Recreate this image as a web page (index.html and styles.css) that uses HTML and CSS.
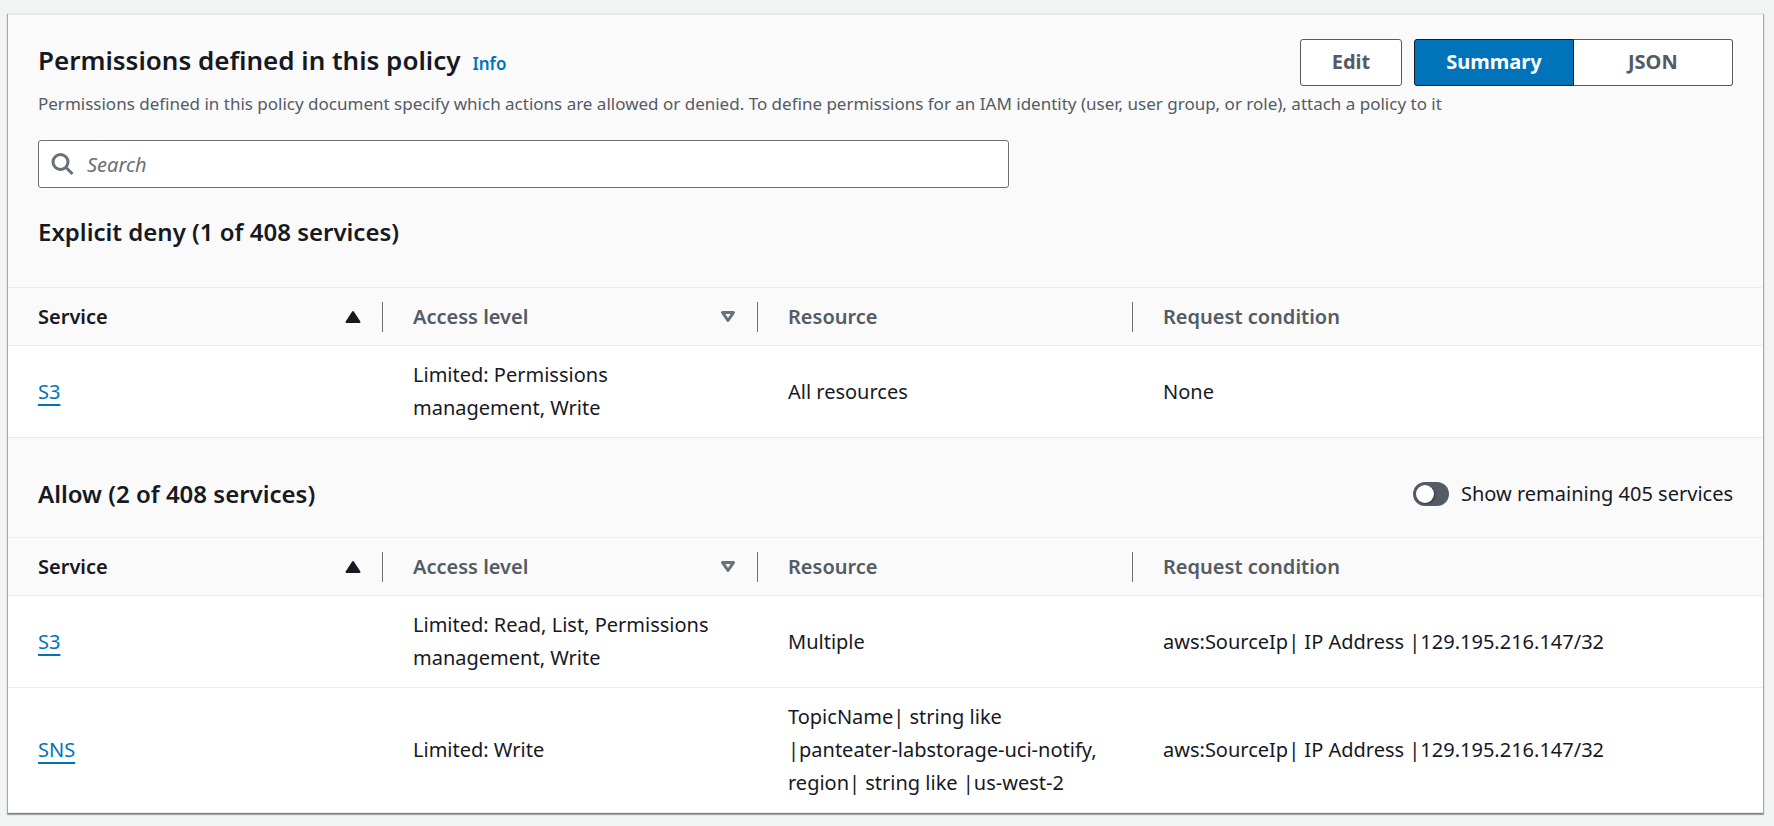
FILE: index.html
```html
<!DOCTYPE html>
<html lang="en">
<head>
    <meta charset="UTF-8">
    <meta name="viewport" content="width=device-width, initial-scale=1.0">
    <title>Permissions defined in this policy</title>
    <link rel="stylesheet" href="styles.css">
</head>
<body>
    <main class="policy-card">
        <header class="policy-header">
            <div class="title-row">
                <h1>Permissions defined in this policy</h1>
                <a href="#info" class="info-link">Info</a>
            </div>
            <div class="actions">
                <button type="button" class="button">Edit</button>
                <div class="segmented" role="group" aria-label="Policy view">
                    <button type="button" class="segment active" aria-pressed="true">Summary</button>
                    <button type="button" class="segment" aria-pressed="false">JSON</button>
                </div>
            </div>
        </header>
        <p class="description">Permissions defined in this policy document specify which actions are allowed or denied. To define permissions for an IAM identity (user, user group, or role), attach a policy to it</p>

        <div class="search-row">
            <label class="search-box">
                <svg class="search-icon" viewBox="0 0 24 24" aria-hidden="true">
                    <circle cx="9.5" cy="10" r="7.5"/>
                    <path d="M15 15.5 L21.5 22"/>
                </svg>
                <input type="search" class="search-input" placeholder="Search" aria-label="Search">
            </label>
        </div>

        <div class="section-header deny-header">
            <h2>Explicit deny (1 of 408 services)</h2>
        </div>
        <table class="services">
            <thead>
                <tr>
                    <th class="sorted" aria-sort="ascending">
                        <div class="th-content">Service
                            <svg class="sort-icon" viewBox="0 0 16 14" aria-hidden="true"><path class="sort-fill" d="M8 2 L14.5 12 H1.5 Z"/></svg>
                        </div>
                    </th>
                    <th>
                        <div class="th-content">Access level
                            <svg class="sort-icon" viewBox="0 0 16 14" aria-hidden="true"><path class="sort-outline" d="M2.5 2.5 H13.5 L8 10.5 Z"/></svg>
                        </div>
                    </th>
                    <th><div class="th-content">Resource</div></th>
                    <th><div class="th-content">Request condition</div></th>
                </tr>
            </thead>
            <tbody>
                <tr>
                    <td><a href="#deny-s3" class="service-link">S3</a></td>
                    <td>Limited: Permissions management, Write</td>
                    <td>All resources</td>
                    <td>None</td>
                </tr>
            </tbody>
        </table>

        <div class="section-header allow-header">
            <h2>Allow (2 of 408 services)</h2>
            <label class="toggle">
                <input type="checkbox" class="toggle-input" role="switch">
                Show remaining 405 services
            </label>
        </div>
        <table class="services">
            <thead>
                <tr>
                    <th class="sorted" aria-sort="ascending">
                        <div class="th-content">Service
                            <svg class="sort-icon" viewBox="0 0 16 14" aria-hidden="true"><path class="sort-fill" d="M8 2 L14.5 12 H1.5 Z"/></svg>
                        </div>
                    </th>
                    <th>
                        <div class="th-content">Access level
                            <svg class="sort-icon" viewBox="0 0 16 14" aria-hidden="true"><path class="sort-outline" d="M2.5 2.5 H13.5 L8 10.5 Z"/></svg>
                        </div>
                    </th>
                    <th><div class="th-content">Resource</div></th>
                    <th><div class="th-content">Request condition</div></th>
                </tr>
            </thead>
            <tbody>
                <tr>
                    <td><a href="#allow-s3" class="service-link">S3</a></td>
                    <td>Limited: Read, List, Permissions management, Write</td>
                    <td>Multiple</td>
                    <td>aws:SourceIp| IP Address |129.195.216.147/32</td>
                </tr>
                <tr>
                    <td><a href="#allow-sns" class="service-link">SNS</a></td>
                    <td>Limited: Write</td>
                    <td>TopicName| string like <span class="value">|panteater-labstorage-uci-notify,</span> region| string like <span class="value">|us-west-2</span></td>
                    <td>aws:SourceIp| IP Address |129.195.216.147/32</td>
                </tr>
            </tbody>
        </table>
    </main>
</body>
</html>
```
FILE: styles.css
```css
* {
    box-sizing: border-box;
}
body {
    margin: 0;
    padding: 14px 11px 13px 8px;
    background-color: #f2f3f3;
    color: #16191f;
    font-family: "Noto Sans", "Open Sans", sans-serif;
    font-size: 20px;
    line-height: 33px;
}
h1, h2, p {
    margin: 0;
}
a {
    color: #0073bb;
}
.policy-card {
    background-color: #fafafa;
    border-top: 1px solid #eaeded;
    box-shadow: 0 1px 1px 1px rgba(0, 28, 36, 0.3), 0 1px 1px rgba(0, 28, 36, 0.3);
}
.policy-header {
    display: flex;
    justify-content: space-between;
    align-items: flex-start;
    padding: 24px 30px 0;
}
.title-row {
    display: flex;
    align-items: baseline;
    gap: 12px;
}
h1 {
    font-size: 26px;
    font-weight: 600;
    line-height: 42px;
}
.info-link {
    font-size: 17px;
    font-weight: 600;
    text-decoration: none;
}
.description {
    padding: 3px 30px 0;
    color: #545b64;
    font-size: 17px;
    line-height: 30px;
}
.actions {
    display: flex;
    gap: 12px;
}
.button, .segment {
    height: 47px;
    padding: 0 31px 2px;
    border: 1px solid #545b64;
    border-radius: 3px;
    background-color: #fff;
    color: #545b64;
    font-family: inherit;
    font-size: 20px;
    font-weight: 700;
    cursor: pointer;
}
.segmented {
    display: grid;
    grid-template-columns: 1fr 1fr;
}
.segment {
    border-left: none;
    border-radius: 0 3px 3px 0;
}
.segment.active {
    border: 1px solid #16191f;
    border-radius: 3px 0 0 3px;
    background-color: #0073bb;
    color: #fff;
}
.search-row {
    display: grid;
    grid-template-columns: 7fr 5fr;
    column-gap: 30px;
    padding: 21px 30px 0;
}
.search-box {
    display: flex;
    align-items: center;
    gap: 12px;
    height: 48px;
    padding: 0 12px;
    border: 1px solid #687078;
    border-radius: 3px;
    background-color: #fff;
}
.search-icon {
    width: 24px;
    height: 24px;
    fill: none;
    stroke: #687078;
    stroke-width: 3;
}
.search-input {
    flex: 1;
    padding: 0;
    border: none;
    outline: none;
    background: none;
    color: inherit;
    font-family: inherit;
    font-size: 20px;
}
.search-input::placeholder {
    color: #687078;
    font-style: italic;
}
.section-header {
    display: flex;
    justify-content: space-between;
    align-items: center;
}
.deny-header {
    padding: 28px 30px 39px;
}
.allow-header {
    padding: 39px 30px 27px;
}
h2 {
    font-size: 24px;
    font-weight: 600;
    line-height: 32px;
}
.toggle {
    display: flex;
    align-items: center;
    gap: 12px;
    cursor: pointer;
}
.toggle-input {
    appearance: none;
    width: 36px;
    height: 24px;
    margin: 0;
    padding: 3px;
    border-radius: 12px;
    background-color: #545b64;
    cursor: pointer;
}
.toggle-input::before {
    content: "";
    display: block;
    width: 18px;
    height: 18px;
    border-radius: 50%;
    background-color: #fff;
    box-shadow: 1px 1px 2px rgba(0, 0, 0, 0.4);
}
.toggle-input:checked {
    background-color: #0073bb;
}
.toggle-input:checked::before {
    margin-left: 12px;
}
.services {
    width: 100%;
    table-layout: fixed;
    border-spacing: 0;
}
.services th {
    width: 375px;
    padding: 14px 0 13px;
    border-top: 1px solid #eaeded;
    border-bottom: 1px solid #eaeded;
    color: #545b64;
    font-weight: 600;
    text-align: left;
}
.services th:last-child {
    width: auto;
}
.services th.sorted {
    color: #16191f;
}
.th-content {
    display: flex;
    justify-content: space-between;
    align-items: center;
    padding: 0 21px 0 30px;
    border-right: 1px solid #687078;
    line-height: 30px;
}
.services th:last-child .th-content {
    border-right: none;
}
.sort-icon {
    width: 16px;
    height: 14px;
    stroke-linejoin: round;
}
.sort-fill {
    fill: #16191f;
    stroke: #16191f;
    stroke-width: 2;
}
.sort-outline {
    fill: none;
    stroke: #687078;
    stroke-width: 3;
}
.services td {
    padding: 12px 15px 13px 30px;
    border-bottom: 1px solid #eaeded;
    background-color: #fff;
    vertical-align: middle;
}
.value {
    white-space: nowrap;
}
.service-link {
    text-decoration-thickness: 2px;
    text-underline-offset: 5px;
}
```
